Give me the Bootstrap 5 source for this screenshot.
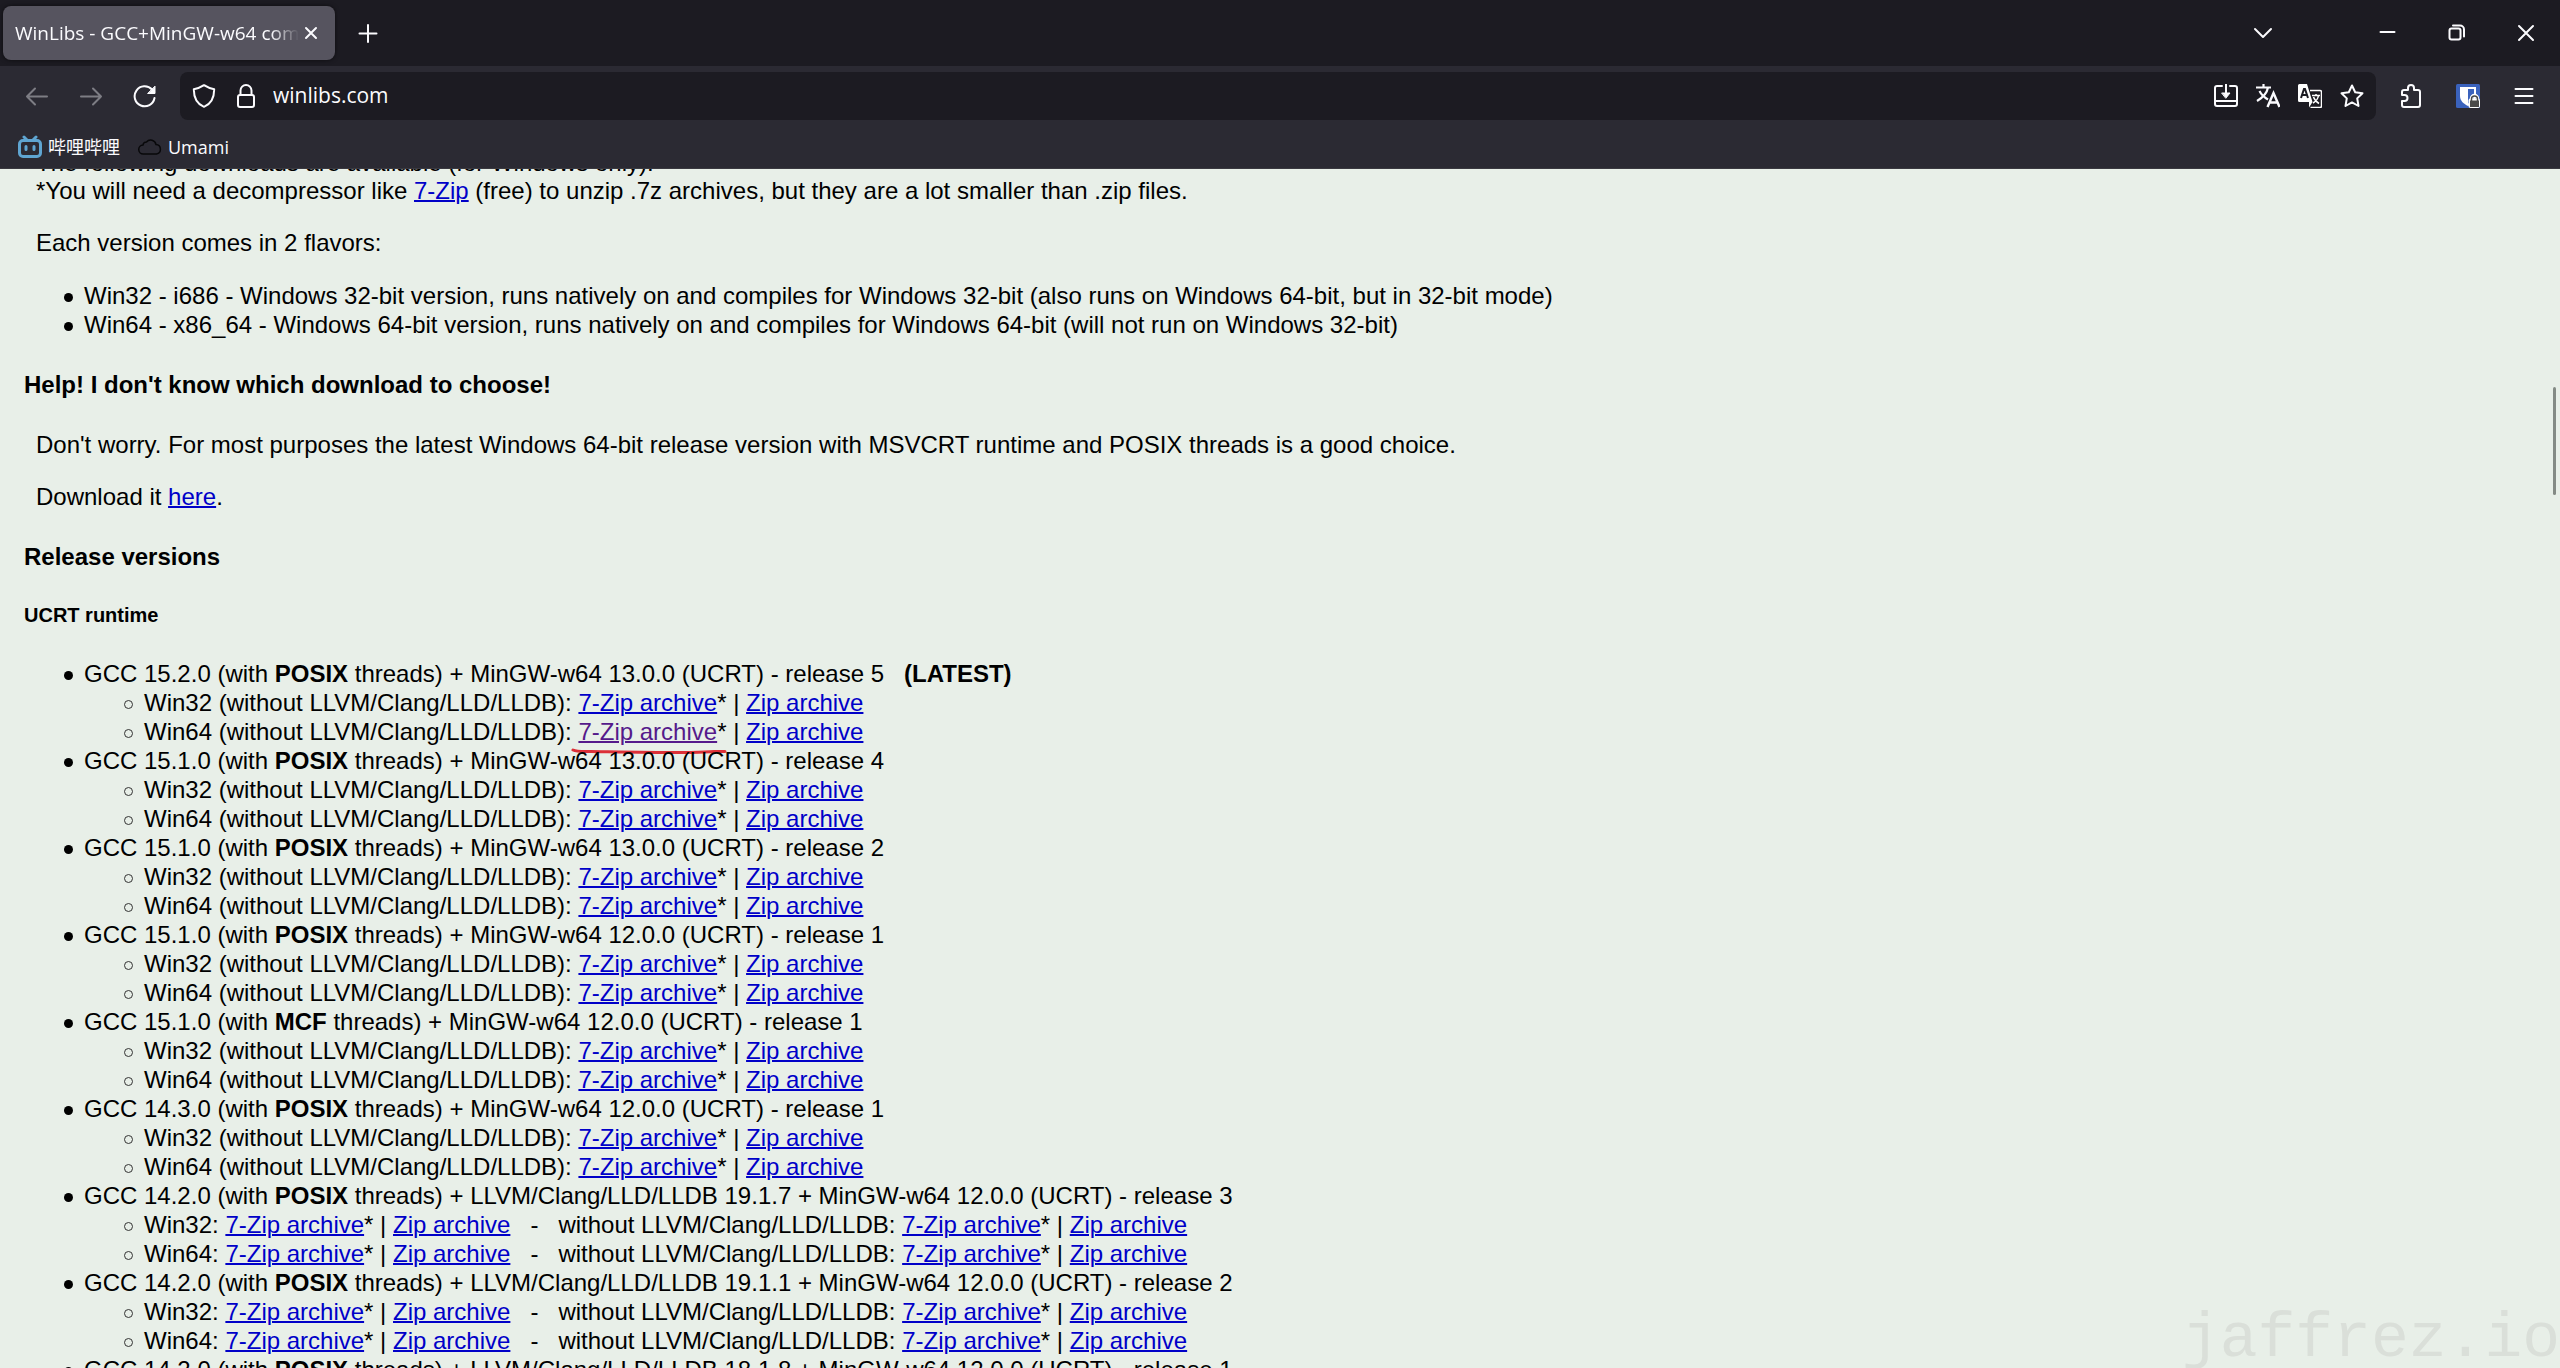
<!DOCTYPE html>
<html lang="en">
<head>
<meta charset="utf-8">
<meta name="viewport" content="width=device-width, initial-scale=1">
<title>WinLibs - GCC+MinGW-w64 compiler for Windows</title>
<link href="https://cdn.jsdelivr.net/npm/bootstrap@5.3.0/dist/css/bootstrap.min.css" rel="stylesheet">
<style>
  body { background: #e8efe8; font-family: "Liberation Sans", Arial, sans-serif; }
  .ui-font { font-family: "Open Sans", "Noto Sans", "Noto Sans CJK SC", sans-serif; color: #fbfbfe; }
  .tab-strip { background: #1c1b22; height: 66px; padding-left: 3px; }
  .tab-item { background: #56545f; width: 332px; height: 54px; border-radius: 8px; padding: 0 12px; box-shadow: 0 0 4px rgba(0,0,0,.6); }
  .tab-title { font-size: 19px; -webkit-mask-image: linear-gradient(to right, #000 90%, transparent); mask-image: linear-gradient(to right, #000 90%, transparent); }
  .chrome-btn { background: none; border: 0; padding: 0; color: inherit; display: inline-flex; align-items: center; justify-content: center; flex: none; }
  .w-tool { width: 54px; height: 54px; }
  .w-side { width: 56px; height: 48px; }
  .w-page { width: 42px; height: 42px; }
  .w-win { width: 69px; height: 66px; }
  .new-tab { margin-left: 6px; }
  .list-tabs { margin-right: 63px; }
  .nav-strip { background: #2b2a33; height: 60px; padding: 0 8px 0 10px; }
  .address { background: #1c1b22; height: 48px; border-radius: 8px; padding: 0 3px; margin: 0 8px; }
  .address input { background: none; border: 0; outline: 0; color: #fbfbfe; font-size: 21px; padding: 0 6px; min-width: 0; }
  .marks-strip { background: #2b2a33; height: 43px; padding: 0 18px; gap: 18px; border-bottom: 1px solid #3a3940; }
  .marks-strip a { color: #fbfbfe; font-size: 18px; gap: 6px; }
  svg.line { fill: none; stroke: currentColor; stroke-width: 2; stroke-linecap: round; stroke-linejoin: round; }
  .doc { color: #000; font-size: 24px; line-height: 28px; padding: 0 24px; margin-top: -20px; white-space: nowrap; }
  .doc p { margin: 0 12px 24px; }
  .doc h3 { font-size: 24px; line-height: 28px; font-weight: 700; margin: 32px 0; }
  .doc h4 { font-size: 20px; line-height: 24px; font-weight: 700; margin: 32px 0; }
  .doc ul { margin: 0; padding-left: 60px; line-height: 29px; list-style: none; }
  .doc li { position: relative; }
  .doc li::before { content: ""; position: absolute; left: -20px; top: 12px; width: 9px; height: 9px; border-radius: 50%; background: #000; }
  .doc li li::before { background: none; border: 1px solid #333; }
  .doc a { color: #0000c8; text-decoration-thickness: 2px; }
  .doc a.seen { color: #551a8b; }
  .pen { left: -7px; top: 30px; color: #dc3038; }
  .thumb { right: 4px; top: 218px; width: 3px; height: 108px; background: #848a85; }
  .stamp { right: 0; bottom: -8px; font-family: "Liberation Mono", monospace; font-size: 63px; line-height: 72px; color: #dadfd9; }
</style>
</head>
<body class="vh-100 overflow-hidden d-flex flex-column">

<header class="ui-font flex-shrink-0">
  <div class="tab-strip d-flex align-items-center">
    <div class="tab-item d-flex align-items-center">
      <span class="tab-title flex-fill overflow-hidden text-nowrap">WinLibs - GCC+MinGW-w64 compiler</span>
      <button class="chrome-btn" aria-label="Close tab"><svg class="line" width="24" height="24"><path d="M7 7l10 10M17 7L7 17"/></svg></button>
    </div>
    <button class="chrome-btn w-tool new-tab" aria-label="New tab"><svg class="line" width="24" height="24"><path d="M12 4v17M3.500 12.500h17"/></svg></button>
    <button class="chrome-btn w-tool ms-auto list-tabs" aria-label="List all tabs"><svg class="line" width="24" height="24"><path d="M4 8l8 8 8-8"/></svg></button>
    <button class="chrome-btn w-win" aria-label="Minimize"><svg class="line" width="24" height="24"><path d="M4.500 11h14"/></svg></button>
    <button class="chrome-btn w-win" aria-label="Restore"><svg class="line" width="24" height="24"><rect x="4.500" y="7.500" width="11" height="11" rx="2"/><path d="M8 4.500h7a4 4 0 0 1 4 4v7"/></svg></button>
    <button class="chrome-btn w-win" aria-label="Close window"><svg class="line" width="24" height="24"><path d="M5 5l14 14M19 5L5 19"/></svg></button>
  </div>

  <nav class="nav-strip d-flex align-items-center">
    <button class="chrome-btn w-tool" aria-label="Back" disabled><svg class="line" width="24" height="24" stroke-opacity=".4"><path d="M22 12.500H2M10 4.500l-8 8 8 8"/></svg></button>
    <button class="chrome-btn w-tool" aria-label="Forward" disabled><svg class="line" width="24" height="24" stroke-opacity=".4"><path d="M2 12.500h20M14 4.500l8 8-8 8"/></svg></button>
    <button class="chrome-btn w-tool" aria-label="Reload"><svg class="line" width="24" height="24"><path d="M21.500 14A10 10 0 1 1 19 5.500"/><path d="M22 2.500v7h-7z" fill="currentColor" stroke-width="1"/></svg></button>
    <div class="address d-flex align-items-center flex-fill">
      <button class="chrome-btn w-page" aria-label="Tracking protection"><svg class="line" width="24" height="24"><path d="M12 1.200C9 3.200 5.500 4.500 1.800 5.200C1.800 13 4 19.500 12 22.800C20 19.500 22.200 13 22.200 5.200C18.500 4.500 15 3.200 12 1.200z"/></svg></button>
      <button class="chrome-btn w-page" aria-label="Site information"><svg class="line" width="24" height="24"><rect x="4" y="11" width="16" height="12" rx="2"/><path d="M6.500 11V6.500a5.500 5.500 0 0 1 11 0V11"/></svg></button>
      <input class="flex-fill" type="text" aria-label="Address" value="winlibs.com">
      <button class="chrome-btn w-page" aria-label="Install page"><svg class="line" width="24" height="24"><path d="M8 2H3a2 2 0 0 0-2 2v16a2 2 0 0 0 2 2h18a2 2 0 0 0 2-2V4a2 2 0 0 0-2-2h-5M1 17h22M12 0v11"/><path d="M8 9h8l-4 5z" fill="currentColor" stroke-width="1"/></svg></button>
      <button class="chrome-btn w-page" aria-label="Translate"><svg width="24" height="24" fill="none" stroke="#fbfbfe"><path d="M0 3.500h15M7.500 0v3.500M12 3.500C11 9 6 14 1 17M3.500 7c2 4 5 6.500 8.500 8.500" stroke-width="2.200"/><path d="M11.500 23L17.500 9l6 14M13.500 18.500h8" stroke-width="2.400"/></svg></button>
      <button class="chrome-btn w-page" aria-label="Translate selection"><svg width="24" height="24" fill="none" stroke="#fff"><path d="M12 6.500h10a1.500 1.500 0 0 1 1.500 1.500v14a1.500 1.500 0 0 1-1.500 1.500H12.500" stroke-width="1.500"/><path d="M1.500 0H9l5.500 18L11 23.500V18H1.500A1.500 1.500 0 0 1 0 16.500v-15A1.500 1.500 0 0 1 1.500 0z" fill="#fff" stroke="none"/><path d="M3 14L6 5h1l3 9M4.500 11h4" stroke="#1c1b22" stroke-width="2"/><path d="M14 11.500h8M18 10v1.500M20.500 11.500c-.5 3-3 6-5.500 7.500M15.500 13c1 3 3 5 5.500 6.500" stroke-width="1.500"/></svg></button>
      <button class="chrome-btn w-page" aria-label="Bookmark this page"><svg class="line" width="24" height="24"><path d="M12 1.500l3.200 6.700 7.300 1-5.300 5.200 1.300 7.600-6.500-3.600L5.500 22l1.300-7.600L1.500 9.200l7.300-1z"/></svg></button>
    </div>
    <button class="chrome-btn w-side" aria-label="Extensions"><svg class="line" width="24" height="24"><path d="M2 11V8a2 2 0 0 1 2-2h4V4a3 3 0 0 1 6 0v2h4a2 2 0 0 1 2 2v13a2 2 0 0 1-2 2H4a2 2 0 0 1-2-2v-4h2.500a3 3 0 0 0 0-6z"/></svg></button>
    <button class="chrome-btn w-side" aria-label="Bitwarden"><svg width="24" height="24"><rect width="24" height="24" rx="1.500" fill="#3a62bd"/><path d="M4 3h16v9c0 5-4 8-8 10C8 20 4 17 4 12z" fill="#fff"/><path d="M12 5h6v7c0 3.500-3 6-6 7.500z" fill="#3a62bd"/><rect x="12.500" y="14.500" width="11.500" height="9.500" rx="2" fill="#fff"/><path d="M15.500 16v-1.500a3 3 0 0 1 6 0V16" fill="none" stroke="#fff" stroke-width="3.500"/><path d="M15.500 17v-2a3 3 0 0 1 6 0v2" fill="none" stroke="#4a4a4a" stroke-width="1.500"/><rect x="14" y="16.500" width="9" height="6.500" fill="#4a4a4a"/></svg></button>
    <button class="chrome-btn w-side" aria-label="Menu"><svg class="line" width="24" height="24"><path d="M3.500 5h17M3.500 12h17M3.500 19h17"/></svg></button>
  </nav>

  <div class="marks-strip d-flex align-items-center">
    <a href="#" class="d-flex align-items-center text-decoration-none"><svg width="24" height="24" fill="none" stroke="#5fa5d2" stroke-width="3" stroke-linecap="round"><rect x="1.500" y="5.500" width="21" height="16" rx="3.500"/><path d="M6 2l3 3M18 2l-3 3M8 11.500v3M16 11.500v3"/></svg><span>哔哩哔哩</span></a>
    <a href="#" class="d-flex align-items-center text-decoration-none"><svg width="24" height="24" fill="none" stroke="#08080a" stroke-width="1.500"><path d="M5.500 19a4.500 4.500 0 0 1-.5-9 3.500 3.500 0 0 1 3.500-3A5.500 5.500 0 0 1 18 9.500a4.800 4.800 0 0 1 .5 9.500z"/></svg><span>Umami</span></a>
  </div>
</header>

<main class="position-relative overflow-hidden flex-fill">
  <div class="doc">
    <p>The following downloads are available (for Windows only):<br>*You will need a decompressor like <a href="#">7-Zip</a> (free) to unzip .7z archives, but they are a lot smaller than .zip files.</p>
    <p>Each version comes in 2 flavors:</p>
    <ul>
      <li>Win32 - i686 - Windows 32-bit version, runs natively on and compiles for Windows 32-bit (also runs on Windows 64-bit, but in 32-bit mode)</li>
      <li>Win64 - x86_64 - Windows 64-bit version, runs natively on and compiles for Windows 64-bit (will not run on Windows 32-bit)</li>
    </ul>
    <h3>Help! I don't know which download to choose!</h3>
    <p>Don't worry. For most purposes the latest Windows 64-bit release version with MSVCRT runtime and POSIX threads is a good choice.</p>
    <p>Download it <a href="#">here</a>.</p>
    <h3>Release versions</h3>
    <h4>UCRT runtime</h4>
    <ul>
      <li>GCC 15.2.0 (with <b>POSIX</b> threads) + MinGW-w64 13.0.0 (UCRT) - release 5 &nbsp; <b>(LATEST)</b>
        <ul>
          <li>Win32 (without LLVM/Clang/LLD/LLDB): <a href="#">7-Zip archive</a>* | <a href="#">Zip archive</a></li>
          <li>Win64 (without LLVM/Clang/LLD/LLDB): <span class="position-relative"><a href="#" class="seen">7-Zip archive</a><svg class="pen line position-absolute" width="156" height="8"><path stroke-width="3" d="M2 2C6 4 12 3.500 20 3.500S90 5 120 4.500S140 3 154 3.500" style="stroke-width:3"/></svg></span>* | <a href="#">Zip archive</a></li>
        </ul>
      </li>
      <li>GCC 15.1.0 (with <b>POSIX</b> threads) + MinGW-w64 13.0.0 (UCRT) - release 4
        <ul>
          <li>Win32 (without LLVM/Clang/LLD/LLDB): <a href="#">7-Zip archive</a>* | <a href="#">Zip archive</a></li>
          <li>Win64 (without LLVM/Clang/LLD/LLDB): <a href="#">7-Zip archive</a>* | <a href="#">Zip archive</a></li>
        </ul>
      </li>
      <li>GCC 15.1.0 (with <b>POSIX</b> threads) + MinGW-w64 13.0.0 (UCRT) - release 2
        <ul>
          <li>Win32 (without LLVM/Clang/LLD/LLDB): <a href="#">7-Zip archive</a>* | <a href="#">Zip archive</a></li>
          <li>Win64 (without LLVM/Clang/LLD/LLDB): <a href="#">7-Zip archive</a>* | <a href="#">Zip archive</a></li>
        </ul>
      </li>
      <li>GCC 15.1.0 (with <b>POSIX</b> threads) + MinGW-w64 12.0.0 (UCRT) - release 1
        <ul>
          <li>Win32 (without LLVM/Clang/LLD/LLDB): <a href="#">7-Zip archive</a>* | <a href="#">Zip archive</a></li>
          <li>Win64 (without LLVM/Clang/LLD/LLDB): <a href="#">7-Zip archive</a>* | <a href="#">Zip archive</a></li>
        </ul>
      </li>
      <li>GCC 15.1.0 (with <b>MCF</b> threads) + MinGW-w64 12.0.0 (UCRT) - release 1
        <ul>
          <li>Win32 (without LLVM/Clang/LLD/LLDB): <a href="#">7-Zip archive</a>* | <a href="#">Zip archive</a></li>
          <li>Win64 (without LLVM/Clang/LLD/LLDB): <a href="#">7-Zip archive</a>* | <a href="#">Zip archive</a></li>
        </ul>
      </li>
      <li>GCC 14.3.0 (with <b>POSIX</b> threads) + MinGW-w64 12.0.0 (UCRT) - release 1
        <ul>
          <li>Win32 (without LLVM/Clang/LLD/LLDB): <a href="#">7-Zip archive</a>* | <a href="#">Zip archive</a></li>
          <li>Win64 (without LLVM/Clang/LLD/LLDB): <a href="#">7-Zip archive</a>* | <a href="#">Zip archive</a></li>
        </ul>
      </li>
      <li>GCC 14.2.0 (with <b>POSIX</b> threads) + LLVM/Clang/LLD/LLDB 19.1.7 + MinGW-w64 12.0.0 (UCRT) - release 3
        <ul>
          <li>Win32: <a href="#">7-Zip archive</a>* | <a href="#">Zip archive</a> &nbsp; - &nbsp; without LLVM/Clang/LLD/LLDB: <a href="#">7-Zip archive</a>* | <a href="#">Zip archive</a></li>
          <li>Win64: <a href="#">7-Zip archive</a>* | <a href="#">Zip archive</a> &nbsp; - &nbsp; without LLVM/Clang/LLD/LLDB: <a href="#">7-Zip archive</a>* | <a href="#">Zip archive</a></li>
        </ul>
      </li>
      <li>GCC 14.2.0 (with <b>POSIX</b> threads) + LLVM/Clang/LLD/LLDB 19.1.1 + MinGW-w64 12.0.0 (UCRT) - release 2
        <ul>
          <li>Win32: <a href="#">7-Zip archive</a>* | <a href="#">Zip archive</a> &nbsp; - &nbsp; without LLVM/Clang/LLD/LLDB: <a href="#">7-Zip archive</a>* | <a href="#">Zip archive</a></li>
          <li>Win64: <a href="#">7-Zip archive</a>* | <a href="#">Zip archive</a> &nbsp; - &nbsp; without LLVM/Clang/LLD/LLDB: <a href="#">7-Zip archive</a>* | <a href="#">Zip archive</a></li>
        </ul>
      </li>
      <li>GCC 14.2.0 (with <b>POSIX</b> threads) + LLVM/Clang/LLD/LLDB 18.1.8 + MinGW-w64 12.0.0 (UCRT) - release 1</li>
    </ul>
  </div>
  <div class="thumb position-absolute rounded-pill"></div>
  <div class="stamp position-absolute">jaffrez.io</div>
</main>

<script src="https://cdn.jsdelivr.net/npm/bootstrap@5.3.0/dist/js/bootstrap.bundle.min.js"></script>
</body>
</html>
